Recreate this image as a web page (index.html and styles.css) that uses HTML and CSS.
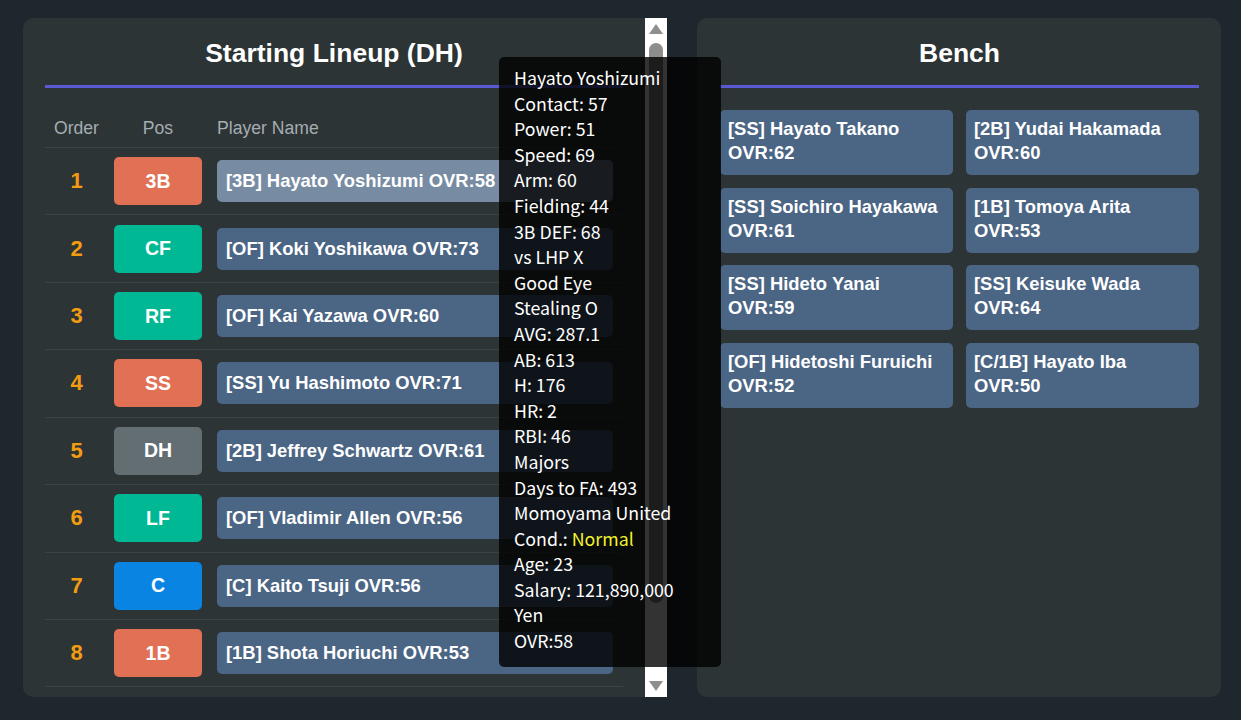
FILE: index.html
```html
<!DOCTYPE html>
<html lang="en">
<head>
<meta charset="utf-8">
<title>Lineup</title>
<link rel="stylesheet" href="styles.css">
</head>
<body>
<div class="board">
  <section class="panel lineup">
    <div class="lineup-body">
      <h2 class="panel-title">Starting Lineup (DH)</h2>
      <div class="roster">
        <div class="roster-head">
          <span class="h-center">Order</span>
          <span class="h-center">Pos</span>
          <span class="h-left">Player Name</span>
        </div>
        <div class="roster-row"><span class="num">1</span><span class="pos pos-if">3B</span><div class="player is-hover">[3B] Hayato Yoshizumi OVR:58</div></div>
        <div class="roster-row"><span class="num">2</span><span class="pos pos-of">CF</span><div class="player">[OF] Koki Yoshikawa OVR:73</div></div>
        <div class="roster-row"><span class="num">3</span><span class="pos pos-of">RF</span><div class="player">[OF] Kai Yazawa OVR:60</div></div>
        <div class="roster-row"><span class="num">4</span><span class="pos pos-if">SS</span><div class="player">[SS] Yu Hashimoto OVR:71</div></div>
        <div class="roster-row"><span class="num">5</span><span class="pos pos-dh">DH</span><div class="player">[2B] Jeffrey Schwartz OVR:61</div></div>
        <div class="roster-row"><span class="num">6</span><span class="pos pos-of">LF</span><div class="player">[OF] Vladimir Allen OVR:56</div></div>
        <div class="roster-row"><span class="num">7</span><span class="pos pos-c">C</span><div class="player">[C] Kaito Tsuji OVR:56</div></div>
        <div class="roster-row"><span class="num">8</span><span class="pos pos-if">1B</span><div class="player">[1B] Shota Horiuchi OVR:53</div></div>
      </div>
    </div>
    <div class="scrollbar" aria-hidden="true">
      <div class="sb-btn">
        <svg width="14" height="10" viewBox="0 0 14 10"><polygon points="7,0 14,10 0,10" fill="#8f8f8f"/></svg>
      </div>
      <div class="sb-track"><div class="sb-thumb"></div></div>
      <div class="sb-btn">
        <svg width="14" height="10" viewBox="0 0 14 10"><polygon points="0,0 14,0 7,10" fill="#8f8f8f"/></svg>
      </div>
    </div>
  </section>

  <section class="panel bench">
    <h2 class="panel-title">Bench</h2>
    <div class="bench-grid">
      <div class="card">[SS] Hayato Takano OVR:62</div>
      <div class="card">[2B] Yudai Hakamada OVR:60</div>
      <div class="card">[SS] Soichiro Hayakawa OVR:61</div>
      <div class="card">[1B] Tomoya Arita OVR:53</div>
      <div class="card">[SS] Hideto Yanai OVR:59</div>
      <div class="card">[SS] Keisuke Wada OVR:64</div>
      <div class="card">[OF] Hidetoshi Furuichi OVR:52</div>
      <div class="card">[C/1B] Hayato Iba OVR:50</div>
    </div>
  </section>

  <div class="tooltip">
    <div>Hayato Yoshizumi</div>
    <div>Contact: 57</div>
    <div>Power: 51</div>
    <div>Speed: 69</div>
    <div>Arm: 60</div>
    <div>Fielding: 44</div>
    <div>3B DEF: 68</div>
    <div>vs LHP X</div>
    <div>Good Eye</div>
    <div>Stealing O</div>
    <div>AVG: 287.1</div>
    <div>AB: 613</div>
    <div>H: 176</div>
    <div>HR: 2</div>
    <div>RBI: 46</div>
    <div>Majors</div>
    <div>Days to FA: 493</div>
    <div>Momoyama United</div>
    <div>Cond.: <span class="cond-ok">Normal</span></div>
    <div>Age: 23</div>
    <div>Salary: 121,890,000 Yen</div>
    <div>OVR:58</div>
  </div>
</div>
</body>
</html>
```

FILE: styles.css
```css
* {
  box-sizing: border-box;
}

html,
body {
  margin: 0;
  height: 100%;
}

body {
  background: #1e272e;
  color: #fff;
  font-family: "Liberation Sans", Arial, sans-serif;
  overflow: hidden;
}

.board {
  position: relative;
  display: flex;
  gap: 30px;
  height: 720px;
  padding: 18px 20px 23px 23px;
}

.panel {
  background: #2d3436;
  border-radius: 10px;
}

.panel-title {
  margin: 0;
  padding: 1px 0 17px;
  border-bottom: 3px solid #5a5bd4;
  text-align: center;
  font-size: 26.5px;
  line-height: 29px;
  font-weight: 700;
  color: #fff;
}

/* lineup column with its scroll rail */
.lineup {
  flex: 0 0 644px;
  display: flex;
  overflow: hidden;
  border-radius: 10px 0 0 10px;
}

.lineup-body {
  flex: 1 1 auto;
  min-width: 0;
  padding: 20px 22px 0;
  overflow: hidden;
}

.scrollbar {
  flex: 0 0 22px;
  display: flex;
  flex-direction: column;
  background: #fff;
}

.sb-btn {
  flex: 0 0 22px;
  display: flex;
  align-items: center;
  justify-content: center;
}

.sb-btn svg {
  display: block;
}

.sb-track {
  flex: 1 1 auto;
  padding: 3px 4px 0;
}

.sb-thumb {
  height: 560px;
  border-radius: 7px;
  background: #8d8d8d;
}

/* batting order */
.roster {
  margin-top: 20px;
}

.roster-head,
.roster-row {
  display: grid;
  grid-template-columns: 63px 100px 1fr;
  align-items: center;
  border-bottom: 1px solid #3b4346;
}

.roster-head {
  padding: 11px 0 9px;
  font-size: 17.6px;
  line-height: 19px;
  color: #a4adb2;
}

.h-center {
  text-align: center;
}

.h-left {
  padding-left: 9px;
}

.roster-row {
  height: 67.43px;
}

.num {
  text-align: center;
  font-size: 22px;
  font-weight: 700;
  color: #f39c12;
}

.pos {
  justify-self: center;
  display: flex;
  align-items: center;
  justify-content: center;
  width: 88px;
  height: 48px;
  border-radius: 5px;
  font-size: 19.5px;
  font-weight: 700;
  color: #fff;
}

.pos-if {
  background: #e17055;
}

.pos-of {
  background: #00b894;
}

.pos-dh {
  background: #636e72;
}

.pos-c {
  background: #0984e3;
}

.player {
  height: 42px;
  margin: 0 10px 0 9px;
  display: flex;
  align-items: center;
  padding: 0 9px;
  border-radius: 5px;
  background: #4b6584;
  font-size: 18.4px;
  font-weight: 700;
  color: #fff;
  white-space: nowrap;
}

.player.is-hover {
  background: #778ca3;
}

/* bench column */
.bench {
  flex: 1 1 auto;
  padding: 20px 22px 30px 23px;
}

.bench-grid {
  display: grid;
  grid-template-columns: 1fr 1fr;
  gap: 12.5px 13px;
  margin-top: 22px;
}

.card {
  min-height: 65px;
  padding: 7px 8px 10px;
  border-radius: 5px;
  background: #4b6584;
  font-size: 18.4px;
  line-height: 24px;
  font-weight: 700;
  color: #fff;
}

/* hover details for the highlighted player */
.tooltip {
  position: absolute;
  left: 499px;
  top: 57px;
  width: 222px;
  padding: 8px 20px 13px 15px;
  border-radius: 5px;
  background: rgba(0, 0, 0, 0.8);
  font-family: "Noto Sans CJK JP", "Noto Sans", sans-serif;
  font-size: 17.75px;
  line-height: 25.6px;
  color: #fff;
}

.cond-ok {
  color: #f2f22a;
}
```
